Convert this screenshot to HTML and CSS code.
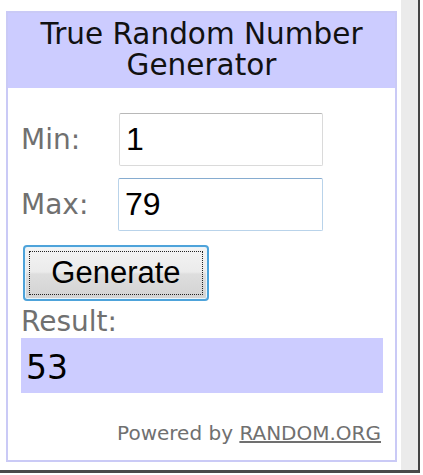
FILE: index.html
```html
<!DOCTYPE html>
<html>
<head>
<meta charset="utf-8">
<link rel="stylesheet" href="styles.css">
</head>
<body>
<div class="shot">
  <div class="canvas">
    <div class="widget">
      <div class="header">True Random Number<br>Generator</div>
      <div class="content">
        <div class="fields">
          <label class="lbl">Min:</label>
          <div class="input">1</div>
          <label class="lbl">Max:</label>
          <div class="input focused">79</div>
        </div>
        <button class="btn"><span class="focus">Generate</span></button>
        <div class="lbl result-label">Result:</div>
        <div class="result">53</div>
        <div class="powered">Powered by <span class="link">RANDOM.ORG</span></div>
      </div>
    </div>
  </div>
  <div class="strip"></div>
</div>
</body>
</html>
```

FILE: styles.css
```css
html, body {
  margin: 0;
  padding: 0;
  background: #ffffff;
}

.shot {
  display: flex;
  width: 418px;
  height: 470px;
  border-right: 2px solid #444444;
  border-bottom: 3px solid #4a4a4a;
}

.canvas {
  width: 401px;
  background: #ffffff;
}

.strip {
  flex: 1;
  background: #ebebeb;
}

.widget {
  margin: 11px 0 0 6px;
  width: 391px;
  box-sizing: border-box;
  border: 2px solid #cacaf6;
  background: #ffffff;
  font-family: "DejaVu Sans", Verdana, sans-serif;
}

.header {
  background: #ccccff;
  color: #111111;
  text-align: center;
  font-size: 29.5px;
  line-height: 31px;
  padding: 6px 0 7px;
}

.content {
  padding: 25px 12px 15px 13px;
}

.fields {
  display: grid;
  grid-template-columns: 98px 204px;
  row-gap: 12px;
  align-items: center;
}

.lbl {
  color: #707070;
  font-size: 28px;
  line-height: 33px;
}

.input {
  box-sizing: border-box;
  height: 53px;
  border: 1px solid #dadada;
  border-top-color: #b8b8b8;
  border-radius: 2px;
  padding-left: 6px;
  font-family: "Liberation Sans", Arial, sans-serif;
  font-size: 32px;
  line-height: 51px;
  color: #000000;
}

.input.focused {
  margin-left: -1px;
  border-color: #b9d3ea;
  border-top-color: #86acd0;
}

.btn {
  display: block;
  box-sizing: border-box;
  width: 186px;
  height: 56px;
  margin: 14px 0 0 2px;
  padding: 4px;
  border: 2px solid #4ea3da;
  border-radius: 4px;
  background: linear-gradient(#f4f4f4 0%, #ebebeb 48%, #dedede 52%, #d2d2d2 100%);
  box-shadow: inset 0 0 0 1px #e8f4fb;
  font-family: "Liberation Sans", Arial, sans-serif;
  font-size: 31px;
  color: #000000;
}

.focus {
  display: flex;
  align-items: center;
  justify-content: center;
  height: 100%;
  box-sizing: border-box;
  border: 1px dotted #222222;
}

.result-label {
  margin-top: 4px;
}

.result {
  background: #ccccff;
  height: 55px;
  box-sizing: border-box;
  padding: 4px 0 0 5px;
  font-size: 33px;
  line-height: 51px;
  color: #000000;
}

.powered {
  margin-top: 28px;
  text-align: right;
  padding-right: 2px;
  color: #707070;
  font-size: 20px;
  line-height: 24px;
}

.link {
  text-decoration: underline;
}
```
